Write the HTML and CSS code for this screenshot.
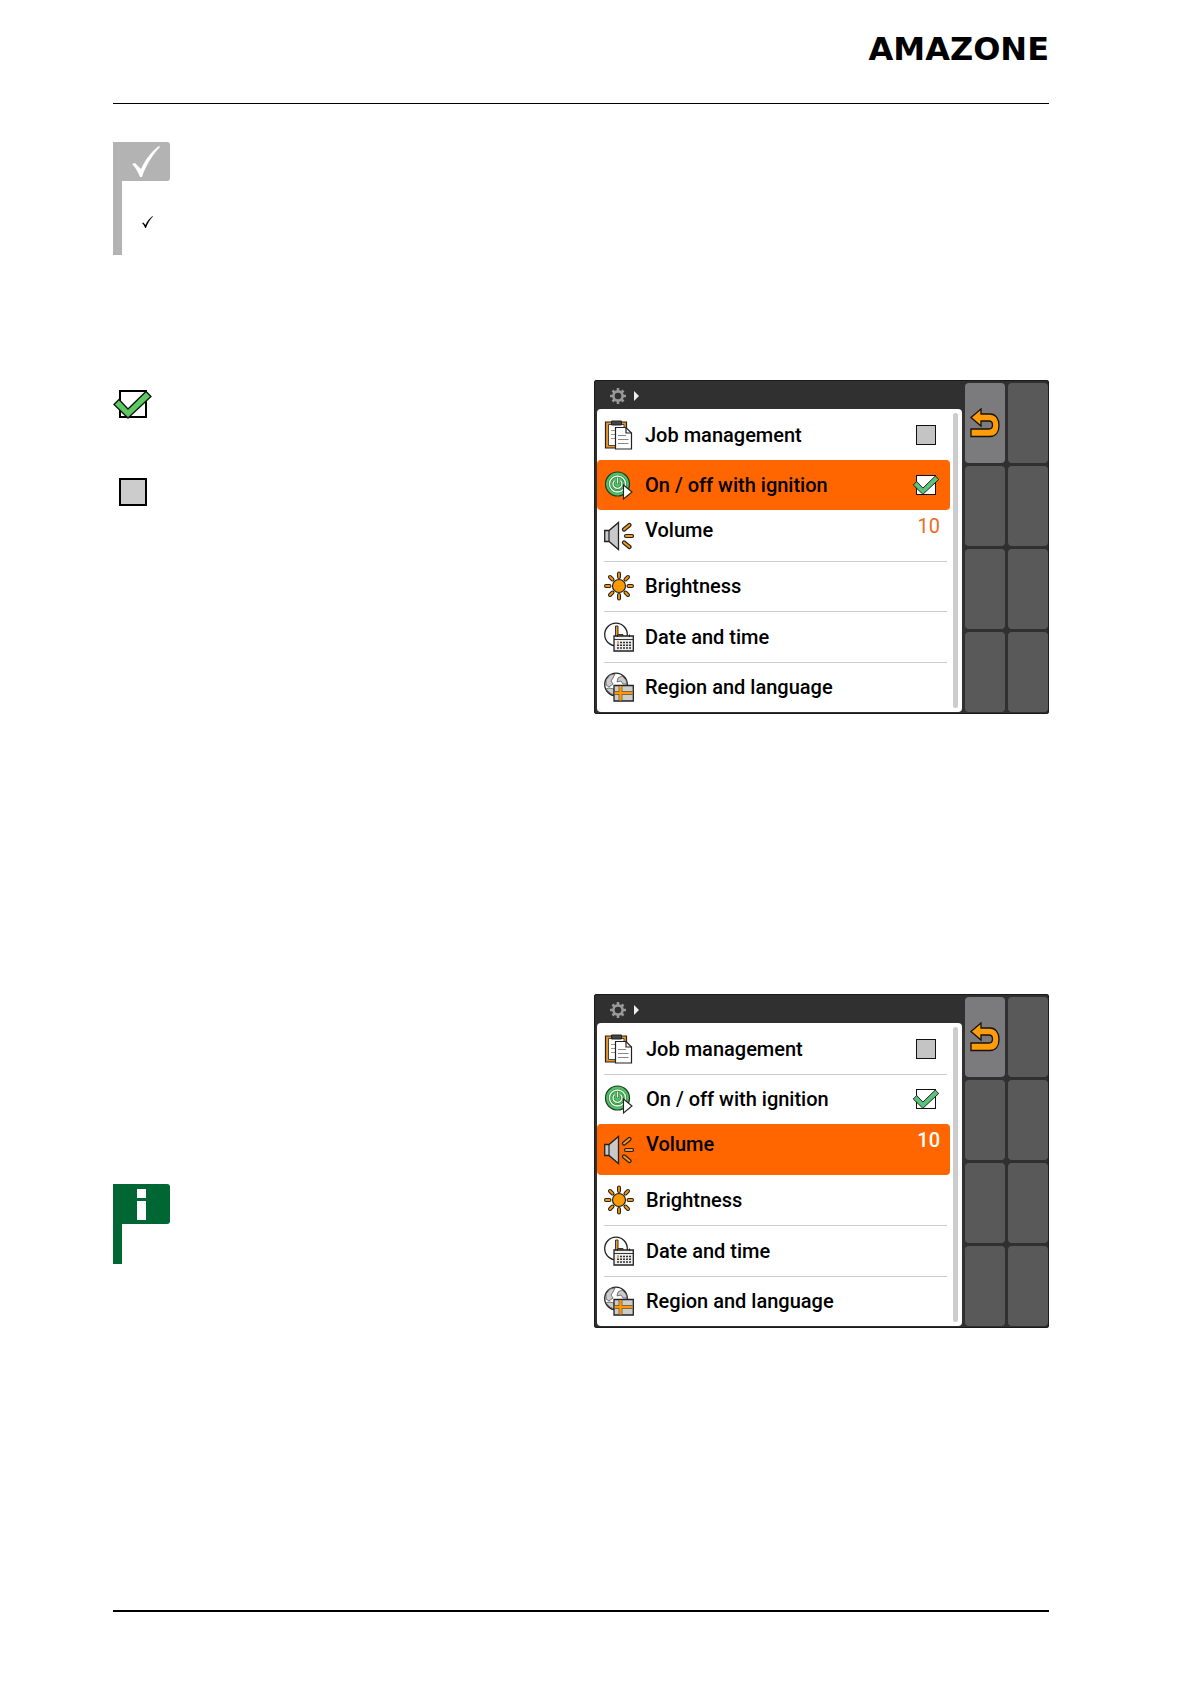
FILE: index.html
```html
<!DOCTYPE html>
<html lang="en">
<head>
    <meta charset="UTF-8">
    <meta name="viewport" content="width=device-width, initial-scale=1.0">
    <title>AMAZONE</title>
    <link rel="stylesheet" href="styles.css">
</head>
<body>
    <!-- shared icons -->
    <svg class="sprite" aria-hidden="true">
        <symbol id="gear" viewBox="0 0 16 16">
            <path d="M8 0v16M0 8h16M2.500 2.500l11 11M13.500 2.500l-11 11" stroke="#999" stroke-width="2.600"/>
            <circle cx="8" cy="8" r="4.600" fill="#303030" stroke="#999" stroke-width="2.600"/>
        </symbol>
        <symbol id="back" viewBox="0 0 30 30">
            <path d="M1 9.500L11 1v5h9c5.500 0 9 4.500 9 11.500s-3.500 11-9 11H1V21h18c2.500 0 3.500-1.500 3.500-4S21 13 19 13h-8v5z" fill="#ff9c0a" stroke="#17120a" stroke-width="1.300"/>
        </symbol>
        <symbol id="tick" viewBox="0 0 39 29">
            <path d="M1 14.500L6 9.500l9 9.500L33 1.500l5 5L15 28z" stroke="#111" stroke-width="1.300"/>
        </symbol>
        <symbol id="job" viewBox="0 0 30 30">
            <path d="M1.500 2h21v26h-21z" fill="#e9962f" stroke="#222" stroke-width="1.200"/>
            <path d="M4.500 4.500h15.500v21H4.500z" fill="#fff" stroke="#222" stroke-width=".8"/>
            <path d="M7.500 1h10v4h-10z" fill="#444" stroke="#222"/>
            <path d="M7 10.500h5M7 14.500h4M7 18.500h4" stroke="#999"/>
            <path d="M11.500 7.500h10.500l5.500 5.500v16h-16z" fill="#fff" stroke="#222" stroke-width="1.200"/>
            <path d="M22 7.500v5.500h5.500" fill="none" stroke="#222" stroke-width="1.200"/>
            <path d="M14 15.500h8M14 19.500h10.500M14 23.500h10.500" stroke="#888"/>
        </symbol>
        <symbol id="power" viewBox="0 0 30 30">
            <circle cx="13.500" cy="14" r="12" fill="#52c163" stroke="#1d3b22" stroke-width="1.200"/>
            <circle cx="13.500" cy="14" r="8" fill="#52c163" stroke="#2a7a3a" stroke-width="2.600"/>
            <circle cx="13.500" cy="14" r="8" fill="none" stroke="#e9f8ea" stroke-width="1.400"/>
            <path d="M10.500 10.500a4.500 4.500 0 1 0 6 0M13.500 7v7" fill="none" stroke="#2a7a3a" stroke-width="2.800"/>
            <path d="M10.500 10.500a4.500 4.500 0 1 0 6 0M13.500 7.500v6" fill="none" stroke="#e9f8ea" stroke-width="1.400"/>
            <path d="M19.500 15l8.500 7-8.500 7z" fill="#fff" stroke="#222" stroke-width="1.100"/>
        </symbol>
        <symbol id="volume" viewBox="0 0 30 30">
            <path d="M.7 9.500H5L14.500 1.500v27L5 20.500H.7z" fill="#c9c9c9" stroke="#222" stroke-width="1.300"/>
            <path d="M5 9.500v11" stroke="#222" stroke-width="1.200"/>
            <path d="M20 8.500l5.500-4.500M22 15h6M20 21.500l5.500 4.500" stroke="#222" stroke-width="4.200" stroke-linecap="round"/>
            <path d="M20 8.500l5.500-4.500M22 15h6M20 21.500l5.500 4.500" stroke="#f59a23" stroke-width="1.900" stroke-linecap="round"/>
        </symbol>
        <symbol id="sun" viewBox="0 0 30 30">
            <path d="M15 2.500v3.500M15 24v3.500M2 15h3.500M24.500 15h3.500M6 6l2.500 2.500M21.500 21.500L24 24M24 6l-2.500 2.500M8.500 21.500L6 24" stroke="#222" stroke-width="4" stroke-linecap="round"/>
            <path d="M15 2.500v3.500M15 24v3.500M2 15h3.500M24.500 15h3.500M6 6l2.500 2.500M21.500 21.500L24 24M24 6l-2.500 2.500M8.500 21.500L6 24" stroke="#f90" stroke-width="1.800" stroke-linecap="round"/>
            <circle cx="15" cy="15" r="6.500" fill="#f90" stroke="#222" stroke-width="1.200"/>
        </symbol>
        <symbol id="clock" viewBox="0 0 30 30">
            <circle cx="12" cy="12.500" r="11.300" fill="#fff" stroke="#222" stroke-width="1.300"/>
            <path d="M11.500 4h2.500v8.500h5v3h-7.500z" fill="#f59a23" stroke="#222" stroke-width=".9"/>
            <path d="M10 14h19.300v15H10z" fill="#eee" stroke="#222" stroke-width="1.300"/>
            <path d="M10 17.500h19" stroke="#222" stroke-width=".9"/>
            <path d="M13 20.500h14M13 23.300h14M13 26h14" stroke="#333" stroke-width="1.500" stroke-dasharray="2 1"/>
            <path d="M13 20.500h2" stroke="#f59a23" stroke-width="1.500"/>
            <path d="M13.500 12.500v2.500M25.500 12.500v2.500" stroke="#222"/>
        </symbol>
        <symbol id="globe" viewBox="0 0 30 30">
            <circle cx="12" cy="12.500" r="11.300" fill="#fff" stroke="#222" stroke-width="1.300"/>
            <path d="M2 8l4-5 5-1-2 4-2 3 2 3-4 3-3-2zM14 6l4-2 4 4 1 4h-4l-2-3-4 1zM5 16l5 1v6l-4-2-4-4z" fill="#ccc" stroke="#555" stroke-width=".8"/>
            <path d="M10 13.500h19.300v15.500H10z" fill="#ccc" stroke="#222" stroke-width="1.300"/>
            <path d="M10.600 21h18M16.500 14v14.500" stroke="#333" stroke-width="3.600"/>
            <path d="M10.600 21h18M16.500 14v14.500" stroke="#f90" stroke-width="2.600"/>
        </symbol>
        <symbol id="mark" viewBox="0 0 28 31">
            <path d="M0 18l3-1 6 6C13 14 19 6 27 0l1 1C21 8 14 19 10 31H8c-2-5-4-9-8-13z"/>
        </symbol>
    </svg>

    <header class="page-header">
        <div class="logo">AMAZONE</div>
    </header>

    <main>
        <div class="note note-grey">
            <div class="flag"><svg class="flag-mark"><use href="#mark"/></svg></div>
            <div class="note-body"><svg class="small-mark"><use href="#mark"/></svg></div>
        </div>

        <section class="step step-ignition">
            <div class="legend">
                <label class="check check-large">
                    <input type="checkbox" aria-label="Enabled" checked>
                    <svg><use href="#tick"/></svg>
                </label>
                <label class="check check-large">
                    <input type="checkbox" aria-label="Disabled">
                    <svg><use href="#tick"/></svg>
                </label>
            </div>
            <div class="terminal">
                <div class="display">
                    <div class="titlebar"><svg class="gear"><use href="#gear"/></svg><span class="arrow"></span></div>
                    <div class="panel">
                        <ul class="menu">
                            <li><svg class="icon"><use href="#job"/></svg><label class="name" for="job1">Job management</label><span class="check"><input type="checkbox" id="job1"><svg><use href="#tick"/></svg></span></li>
                            <li class="active"><svg class="icon"><use href="#power"/></svg><label class="name" for="ign1">On / off with ignition</label><span class="check"><input type="checkbox" id="ign1" checked><svg><use href="#tick"/></svg></span></li>
                            <li><svg class="icon"><use href="#volume"/></svg><span class="name raised">Volume</span><span class="value">10</span></li>
                            <li><svg class="icon"><use href="#sun"/></svg><span class="name">Brightness</span></li>
                            <li><svg class="icon"><use href="#clock"/></svg><span class="name">Date and time</span></li>
                            <li><svg class="icon"><use href="#globe"/></svg><span class="name">Region and language</span></li>
                        </ul>
                        <div class="scrollbar"></div>
                    </div>
                </div>
                <div class="softkeys">
                    <button class="back" aria-label="Back"><svg class="icon"><use href="#back"/></svg></button>
                    <button aria-label="Key 2"></button>
                    <button aria-label="Key 3"></button>
                    <button aria-label="Key 4"></button>
                    <button aria-label="Key 5"></button>
                    <button aria-label="Key 6"></button>
                    <button aria-label="Key 7"></button>
                    <button aria-label="Key 8"></button>
                </div>
            </div>
        </section>

        <section class="step step-volume">
            <div class="note note-green">
                <div class="flag">
                    <svg class="info" viewBox="0 0 9 31"><path d="M0 0h9v9H0zM0 12h9v19H0z" fill="#fff"/></svg>
                </div>
            </div>
            <div class="terminal">
                <div class="display">
                    <div class="titlebar"><svg class="gear"><use href="#gear"/></svg><span class="arrow"></span></div>
                    <div class="panel">
                        <ul class="menu">
                            <li><svg class="icon"><use href="#job"/></svg><label class="name" for="job2">Job management</label><span class="check"><input type="checkbox" id="job2"><svg><use href="#tick"/></svg></span></li>
                            <li><svg class="icon"><use href="#power"/></svg><label class="name" for="ign2">On / off with ignition</label><span class="check"><input type="checkbox" id="ign2" checked><svg><use href="#tick"/></svg></span></li>
                            <li class="active"><svg class="icon"><use href="#volume"/></svg><span class="name raised">Volume</span><span class="value">10</span></li>
                            <li><svg class="icon"><use href="#sun"/></svg><span class="name">Brightness</span></li>
                            <li><svg class="icon"><use href="#clock"/></svg><span class="name">Date and time</span></li>
                            <li><svg class="icon"><use href="#globe"/></svg><span class="name">Region and language</span></li>
                        </ul>
                        <div class="scrollbar"></div>
                    </div>
                </div>
                <div class="softkeys">
                    <button class="back" aria-label="Back"><svg class="icon"><use href="#back"/></svg></button>
                    <button aria-label="Key 2"></button>
                    <button aria-label="Key 3"></button>
                    <button aria-label="Key 4"></button>
                    <button aria-label="Key 5"></button>
                    <button aria-label="Key 6"></button>
                    <button aria-label="Key 7"></button>
                    <button aria-label="Key 8"></button>
                </div>
            </div>
        </section>
    </main>

    <footer class="page-footer"></footer>
</body>
</html>
```

FILE: styles.css
```css
* {
    box-sizing: border-box;
}
body {
    margin: 0;
    padding: 39px 142px 72px 113px;
    min-height: 100vh;
    display: flex;
    flex-direction: column;
    background-color: #fff;
    color: #000;
    font-family: Roboto, sans-serif;
}
svg {
    display: block;
}
.sprite {
    position: absolute;
    width: 0;
    height: 0;
}

/* page frame */
.page-header {
    padding-bottom: 44px;
    border-bottom: 1px solid #000;
}
.logo {
    font-family: "DejaVu Sans", sans-serif;
    font-weight: bold;
    font-size: 32px;
    line-height: 20px;
    text-align: right;
}
main {
    flex: 1;
    padding-top: 38px;
}
.page-footer {
    border-top: 2px solid #000;
}

/* notes */
.note {
    border-left: 9px solid;
}
.flag {
    display: flex;
    justify-content: center;
    align-items: center;
    width: 48px;
    height: 39px;
    padding-right: 9px;
    border-radius: 0 3px 3px 0;
}
.note-grey {
    height: 113px;
    border-color: #b3b3b3;
}
.note-grey .flag {
    background-color: #b3b3b3;
    padding-right: 0;
}
.flag-mark {
    width: 28px;
    height: 31px;
    fill: #fff;
}
.note-body {
    padding: 35px 20px;
}
.small-mark {
    width: 11px;
    height: 12px;
}
.note-green {
    align-self: start;
    height: 80px;
    margin-top: 190px;
    border-color: #063;
}
.note-green .flag {
    height: 40px;
    background-color: #063;
}
.info {
    width: 9px;
    height: 31px;
}

/* steps: explanation left, terminal right */
.step {
    display: grid;
    grid-template-columns: minmax(0, 481fr) minmax(0, 455fr);
}
.step-ignition {
    margin-top: 125px;
}
.step-volume {
    margin-top: 280px;
}
.legend {
    display: flex;
    flex-direction: column;
    align-items: flex-start;
    gap: 59px;
    padding-top: 10px;
}

/* tick boxes */
.check {
    position: relative;
    width: 28px;
    height: 20px;
    padding-left: 4px;
}
.check input {
    appearance: none;
    display: block;
    width: 20px;
    height: 20px;
    margin: 0;
    border: 1px solid #111;
    background-color: #c4c4c4;
}
.check input:checked {
    background-color: #fff;
}
.check svg {
    display: none;
    position: absolute;
    inset: 0;
    width: 100%;
    height: 100%;
    fill: #5cc37c;
    pointer-events: none;
}
.check input:checked + svg {
    display: block;
}
.check-large {
    width: 39px;
    height: 29px;
    padding-left: 6px;
}
.check-large input {
    width: 28px;
    height: 28px;
    border: 2px solid #000;
    background-color: #ccc;
}
.check-large svg {
    fill: #5bcb60;
}

/* terminal */
.terminal {
    display: grid;
    grid-template-columns: 1fr 83px;
    gap: 3px;
    padding: 3px 1px 2px 3px;
    background-color: #303030;
    border-radius: 3px;
    box-shadow: inset 0 0 0 1px #1a1a1a;
}
.display {
    display: flex;
    flex-direction: column;
}
.titlebar {
    display: flex;
    align-items: center;
    gap: 8px;
    height: 26px;
    padding-left: 13px;
}
.gear {
    width: 16px;
    height: 16px;
}
.arrow {
    border: solid transparent;
    border-width: 5px 0 5px 5px;
    border-left-color: #eee;
}
.panel {
    flex: 1;
    display: flex;
    background-color: #fff;
    border-radius: 4px;
}
.menu {
    flex: 1;
    display: flex;
    flex-direction: column;
    margin: 0;
    padding: 0;
    list-style: none;
}
.menu li {
    flex: 1;
    display: flex;
    align-items: center;
    gap: 11px;
    margin: 0 3px 0 7px;
    padding-right: 7px;
    border-top: 1px solid #ccc;
}
.step-volume .menu li {
    gap: 12px;
}
.menu li:first-child,
.menu li.active,
.menu li.active + li {
    border-top-color: transparent;
}
.menu li.active {
    margin: 0;
    padding-left: 7px;
    padding-right: 10px;
    background-color: #f60;
    border-color: #f60;
    border-radius: 4px;
}
.icon {
    flex: none;
    width: 30px;
    height: 30px;
}
.name {
    flex: 1;
    font-size: 20px;
    font-weight: 500;
    line-height: 24px;
}
.raised {
    padding-bottom: 12px;
}
.value {
    padding-bottom: 20px;
    font-size: 20px;
    line-height: 24px;
    color: #f26a21;
}
.active .value {
    color: #fff;
    font-weight: 500;
}
.scrollbar {
    width: 5px;
    margin: 4px 4px 4px 3px;
    border-radius: 3px;
    background-color: #ccc;
}
.softkeys {
    display: grid;
    grid-template-columns: 1fr 1fr;
    grid-auto-rows: 80px;
    gap: 3px;
}
.softkeys button {
    display: flex;
    justify-content: center;
    align-items: center;
    padding: 0;
    border: 0;
    border-radius: 4px;
    background-color: #595959;
}
.softkeys .back {
    background-color: #7b7a7c;
}
```
